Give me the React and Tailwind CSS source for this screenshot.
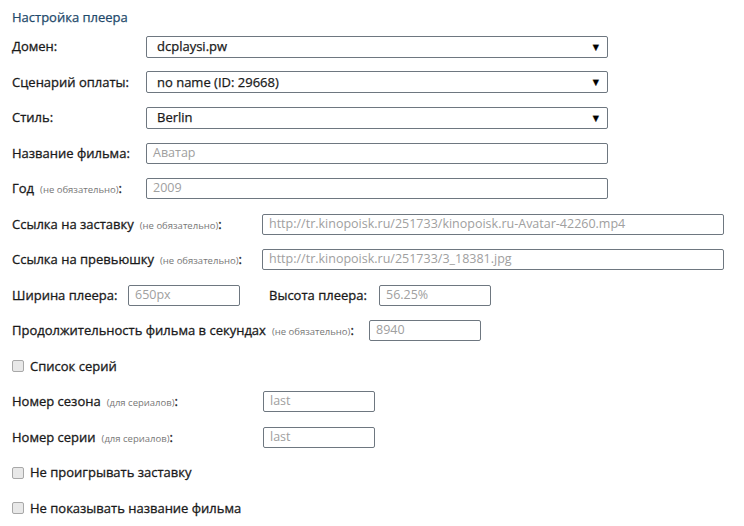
import React from "react";

const FONT = { fontFamily: '"Open Sans", "DejaVu Sans", sans-serif' };

function Note({ children }) {
  return <span className="ml-[6px] text-[9.5px] text-[#777] [-webkit-text-stroke:0px]">({children})</span>;
}

function Select({ value }) {
  return (
    <div className="relative flex h-[22px] w-[462px] items-center rounded-[2px] border border-[#6e7780] bg-white pl-[10px] text-[13px] text-[#1a1a1a] [-webkit-text-stroke:0.25px_#1a1a1a]">
      {value}
      <span className="absolute right-[8px] top-[6px] text-[8px] leading-none text-black">▼</span>
    </div>
  );
}

function Input({ placeholder, w = "w-[462px]" }) {
  return (
    <div className={`flex h-[21px] ${w} items-center rounded-[2px] border border-[#6e7780] bg-white pl-[6px] text-[12.5px] text-[#a0a0a0] [-webkit-text-stroke:0px]`}>
      {placeholder}
    </div>
  );
}

function Row({ label, w = "w-[134px]", children }) {
  return (
    <div className="flex h-[35.5px] items-center">
      <div className={`${w} shrink-0 text-[13px] text-[#1a1a1a] [-webkit-text-stroke:0.3px_#1a1a1a]`}>{label}</div>
      {children}
    </div>
  );
}

function Check({ label }) {
  return (
    <div className="flex h-[35.5px] items-center">
      <span className="mr-[6px] h-[12px] w-[12px] rounded-[2px] border border-[#a8a8a8] bg-[#e8e8e8]" />
      <span className="text-[13px] text-[#1a1a1a] [-webkit-text-stroke:0.3px_#1a1a1a]">{label}</span>
    </div>
  );
}

export default function App() {
  return (
    <div className="min-h-[526px] w-[744px] bg-white px-3" style={FONT}>
      <div className="pt-2 text-[13px] leading-[18px] text-[#1f4a6b] [-webkit-text-stroke:0.25px_#1f4a6b]">Настройка плеера</div>
      <div className="mt-[3px]">
        <Row label="Домен:"><Select value="dcplaysi.pw" /></Row>
        <Row label="Сценарий оплаты:"><Select value="no name (ID: 29668)" /></Row>
        <Row label="Стиль:"><Select value="Berlin" /></Row>
        <Row label="Название фильма:"><Input placeholder="Аватар" /></Row>
        <Row label={<>Год<Note>не обязательно</Note>:</>}><Input placeholder="2009" /></Row>
        <Row w="w-[250px]" label={<>Ссылка на заставку<Note>не обязательно</Note>:</>}>
          <Input placeholder="http://tr.kinopoisk.ru/251733/kinopoisk.ru-Avatar-42260.mp4" />
        </Row>
        <Row w="w-[250px]" label={<>Ссылка на превьюшку<Note>не обязательно</Note>:</>}>
          <Input placeholder="http://tr.kinopoisk.ru/251733/3_18381.jpg" />
        </Row>
        <div className="flex h-[35.5px] items-center text-[13px] text-[#1a1a1a] [-webkit-text-stroke:0.3px_#1a1a1a]">
          <span className="w-[116px]">Ширина плеера:</span>
          <Input placeholder="650px" w="w-[112px]" />
          <span className="ml-[29px] w-[110px]">Высота плеера:</span>
          <Input placeholder="56.25%" w="w-[112px]" />
        </div>
        <Row w="w-[357px]" label={<>Продолжительность фильма в секундах<Note>не обязательно</Note>:</>}>
          <Input placeholder="8940" w="w-[112px]" />
        </Row>
        <Check label="Список серий" />
        <Row w="w-[251px]" label={<>Номер сезона<Note>для сериалов</Note>:</>}>
          <Input placeholder="last" w="w-[112px]" />
        </Row>
        <Row w="w-[251px]" label={<>Номер серии<Note>для сериалов</Note>:</>}>
          <Input placeholder="last" w="w-[112px]" />
        </Row>
        <Check label="Не проигрывать заставку" />
        <Check label="Не показывать название фильма" />
      </div>
    </div>
  );
}
